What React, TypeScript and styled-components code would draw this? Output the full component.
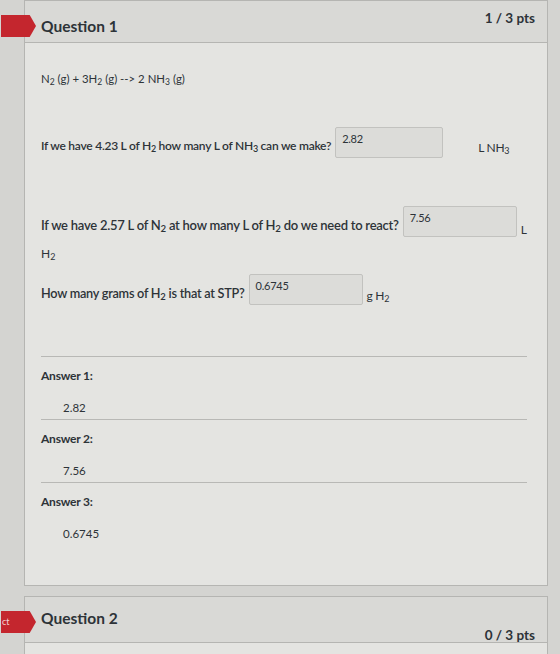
import styled, { createGlobalStyle } from "styled-components"

const Global = createGlobalStyle`
  body{
    margin: 0;
    background: #d4d4d1;
    font-family: Lato, "Open Sans", sans-serif;
    color: #2d3338;
  }
`

const Page = styled.div`
  display: flex;
  flex-direction: column;
  gap: 10px;
  padding: 0 12px 0 24px;
  width: 560px;
  height: 654px;
  box-sizing: border-box;
  overflow: hidden;
`

const Card = styled.div<{ $height: number }>`
  position: relative;
  flex-shrink: 0;
  display: flex;
  flex-direction: column;
  height: ${(p) => p.$height}px;
  box-sizing: border-box;
  border: 1px solid #b5b5b2;
  background: #e4e4e1;
`

const Header = styled.div<{ $low?: boolean }>`
  display: flex;
  justify-content: space-between;
  align-items: flex-start;
  height: ${(p) => (p.$low ? 46 : 42)}px;
  padding: 0 12px 0 16px;
  background: #d9d9d6;
  border-bottom: 1px solid #b5b5b2;
  box-sizing: border-box;
  h2{
    margin: ${(p) => (p.$low ? 12 : 16)}px 0 0;
    font-size: 15.5px;
    font-weight: 700;
  }
  span{
    margin-top: ${(p) => (p.$low ? 30 : 9)}px;
    font-size: 13.5px;
    font-weight: 700;
  }
`

const Tag = styled.div<{ $top: number }>`
  position: absolute;
  left: -24px;
  top: ${(p) => p.$top}px;
  width: 35px;
  height: 22px;
  background: #c4262e;
  clip-path: polygon(0 0, 82% 0, 100% 50%, 82% 100%, 0 100%);
  color: #f3d6d6;
  font-size: 9px;
  line-height: 22px;
  padding-left: 1px;
  box-sizing: border-box;
`

const Body = styled.div`
  display: flex;
  flex-direction: column;
  padding: 0 20px 0 16px;
`

const Equation = styled.p`
  margin: 29px 0 0;
  font-size: 11.4px;
`

const Line = styled.div<{ $top: number; $size: number }>`
  display: flex;
  align-items: flex-start;
  margin-top: ${(p) => p.$top}px;
  font-size: ${(p) => p.$size}px;
  font-weight: 600;
  letter-spacing: -0.25px;
  white-space: nowrap;
  .q{ padding-top: 11px; }
  .u{ padding-top: 13px; font-weight: 400; font-size: 12px; }
`

const Input = styled.div<{ $w: number }>`
  flex-shrink: 0;
  width: ${(p) => p.$w}px;
  height: 31px;
  margin: 0 4px 0 4px;
  padding: 4px 6px;
  box-sizing: border-box;
  background: #dcdcd9;
  border: 1px solid #c2c2bf;
  border-radius: 2px;
  font-size: 11px;
  font-weight: 400;
`

const Plain = styled.p`
  margin: 9px 0 0;
  font-size: 12px;
`

const Answers = styled.div`
  display: flex;
  flex-direction: column;
  margin: 51px 0 0;
`

const Answer = styled.div`
  border-top: 1px solid #b8b8b5;
  padding: 11px 0 0;
  height: 63px;
  box-sizing: border-box;
  h4{
    margin: 0;
    font-size: 12px;
    font-weight: 700;
    letter-spacing: -0.2px;
  }
  p{
    margin: 18px 0 0 22px;
    font-size: 11.5px;
  }
`

const Sub = ({ n }: { n: number }) => (
  <sub style={{ fontSize: "0.75em", verticalAlign: "-2px" }}>{n}</sub>
)

const answers = ["2.82", "7.56", "0.6745"]

export default function App() {
  return (
    <>
      <Global />
      <Page>
        <Card $height={586}>
          <Tag $top={14} />
          <Header>
            <h2>Question 1</h2>
            <span>1 / 3 pts</span>
          </Header>
          <Body>
            <Equation>
              N<Sub n={2} /> (g) + 3H<Sub n={2} /> (g) --&gt; 2 NH<Sub n={3} /> (g)
            </Equation>
            <Line $top={40} $size={12}>
              <span className="q">
                If we have 4.23 L of H<Sub n={2} /> how many L of NH<Sub n={3} /> can we make?
              </span>
              <Input $w={108}>2.82</Input>
              <span className="u" style={{ marginLeft: 31 }}>
                L NH<Sub n={3} />
              </span>
            </Line>
            <Line $top={48} $size={13}>
              <span className="q">
                If we have 2.57 L of N<Sub n={2} /> at how many L of H<Sub n={2} /> do we need to react?
              </span>
              <Input $w={114}>7.56</Input>
              <span className="u" style={{ paddingTop: 16 }}>L</span>
            </Line>
            <Plain>
              H<Sub n={2} />
            </Plain>
            <Line $top={12} $size={12.7}>
              <span className="q">
                How many grams of H<Sub n={2} /> is that at STP?
              </span>
              <Input $w={114}>0.6745</Input>
              <span className="u" style={{ paddingTop: 14 }}>
                g H<Sub n={2} />
              </span>
            </Line>
            <Answers>
              {answers.map((a, i) => (
                <Answer key={i}>
                  <h4>Answer {i + 1}:</h4>
                  <p>{a}</p>
                </Answer>
              ))}
            </Answers>
          </Body>
        </Card>
        <Card $height={80}>
          <Tag $top={14}>ct</Tag>
          <Header $low>
            <h2>Question 2</h2>
            <span>0 / 3 pts</span>
          </Header>
        </Card>
      </Page>
    </>
  )
}
